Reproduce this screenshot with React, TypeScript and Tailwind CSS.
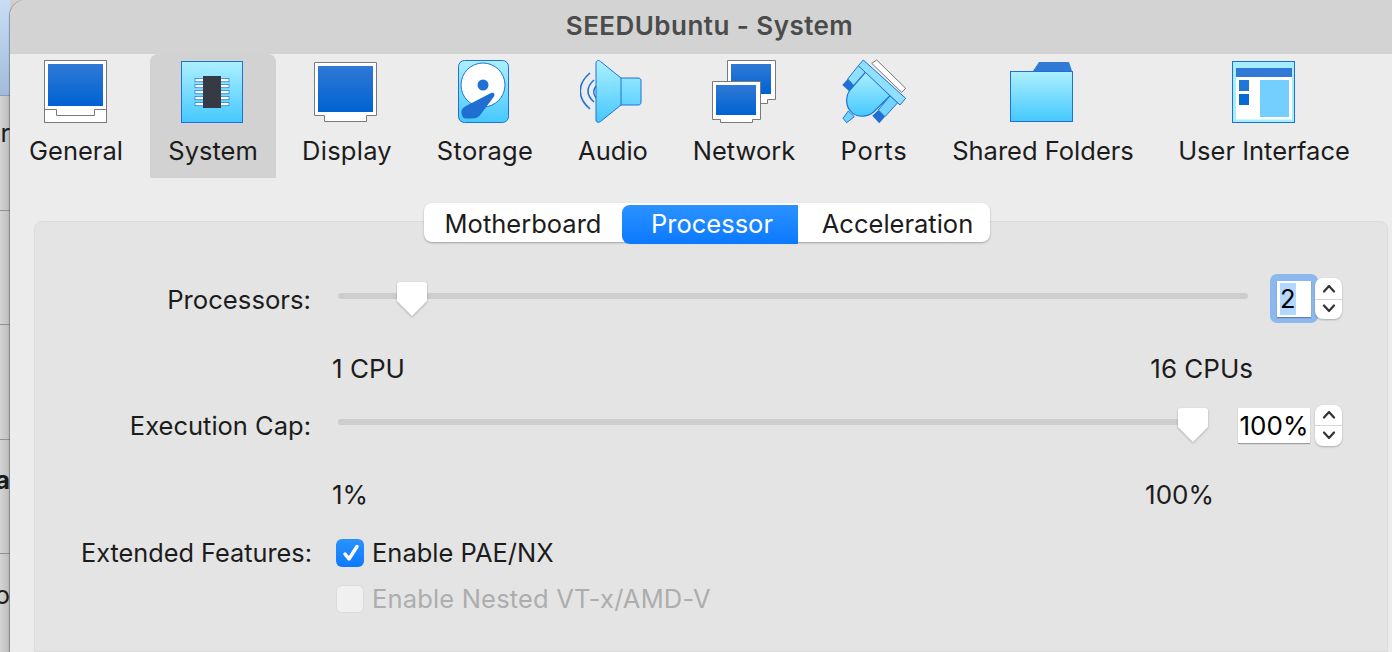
import React from 'react';

const font = "font-['Inter','Liberation_Sans',sans-serif]";

const Gradients = () => (
  <defs>
    <linearGradient id="blue" x1="0" y1="0" x2="0" y2="1">
      <stop offset="0" stopColor="#3079d6" />
      <stop offset="1" stopColor="#0062d2" />
    </linearGradient>
    <linearGradient id="sky" x1="0" y1="0" x2="0" y2="1">
      <stop offset="0" stopColor="#adf0ff" />
      <stop offset="1" stopColor="#45c8ff" />
    </linearGradient>
  </defs>
);

const GeneralIcon = () => (
  <svg width="66" height="66" viewBox="0 0 66 66">
    <Gradients />
    <rect x="1.5" y="1.5" width="62" height="62" fill="#fff" stroke="#7a7a7a" />
    <rect x="5" y="5" width="55" height="42" fill="url(#blue)" />
    <path d="M1.500 50.500H13.500V56.500H51.500V50.500H63.500" fill="none" stroke="#7a7a7a" />
  </svg>
);

const SystemIcon = () => (
  <svg width="66" height="66" viewBox="0 0 66 66">
    <Gradients />
    <rect x="1.5" y="2.5" width="61" height="61" fill="url(#sky)" stroke="#1f72d4" />
    {[19.5, 25.5, 31.5, 37.5, 43.5].map((y) => (
      <rect key={y} x="15" y={y} width="34" height="3.2" fill="#fff" stroke="#2f7ed8" strokeWidth="0.8" />
    ))}
    <rect x="23" y="17" width="18" height="32" fill="#353a45" />
  </svg>
);

const DisplayIcon = () => (
  <svg width="66" height="66" viewBox="0 0 66 66">
    <Gradients />
    <path d="M0.500 3.500H62.500V56.500H52.500V62.500H10.500V56.500H0.500Z" fill="#fff" stroke="#7a7a7a" />
    <rect x="4" y="7" width="55" height="46" fill="url(#blue)" />
  </svg>
);

const StorageIcon = () => (
  <svg width="54" height="66" viewBox="0 0 54 66">
    <Gradients />
    <rect x="0.5" y="1.500" width="50" height="62" rx="6" fill="url(#sky)" stroke="#1f72d4" />
    <circle cx="25" cy="26" r="22" fill="#fff" stroke="#1f72d4" />
    <circle cx="25" cy="26" r="5.500" fill="#1f72d4" />
    <path d="M4 56C2.500 52 4 49 8 47L33 34C35.500 33 37.500 35 36 37.500L23 55C21 58 18 59.500 14 59.500H7.500C5.500 59.500 4.500 58 4 56Z" fill="#1f6fd2" />
  </svg>
);

const AudioIcon = () => (
  <svg width="66" height="66" viewBox="0 0 66 66">
    <Gradients />
    <path d="M16 4C16 1.500 18.500 0.500 20.500 2.500L41 19H58C60 19 61 20 61 22V43C61 45 60 46 58 46H41L20.500 62.500C18.500 64 16 63.500 16 61Z" fill="url(#sky)" stroke="#1f72d4" />
    <path d="M41 19V46" stroke="#1f72d4" fill="none" />
    <path d="M10 14C-3 25 -3 39 10 50" fill="none" stroke="#1f72d4" strokeWidth="1.6" />
    <path d="M14 21C6 28 6 36 14 43" fill="none" stroke="#1f72d4" strokeWidth="1.6" />
    <path d="M16 27C13 31 13 35 16 39" fill="none" stroke="#1f72d4" strokeWidth="1.4" />
  </svg>
);

const NetworkIcon = () => (
  <svg width="66" height="66" viewBox="0 0 66 66">
    <Gradients />
    <path d="M16.500 1.500H64.500V40.500H56.500V44.500H16.500Z" fill="#fff" stroke="#7a7a7a" />
    <rect x="20" y="5" width="40" height="30" fill="url(#blue)" />
    <path d="M1.500 22.500H49.500V60.500H41.500V63.500H9.500V60.500H1.500Z" fill="#fff" stroke="#7a7a7a" />
    <rect x="5" y="26" width="40" height="30" fill="url(#blue)" />
  </svg>
);

const PortsIcon = () => (
  <svg width="66" height="66" viewBox="0 0 66 66">
    <Gradients />
    <path d="M35.700 1L64.700 29.300L60.700 33.300L30.700 4.300Z" fill="#fff" stroke="#777" strokeLinejoin="round" />
    <path d="M17.300 6.700L25 12.700L13 26.700L6.700 20Z" fill="#8fe0ff" stroke="#1f72d4" />
    <path d="M49 36.700L56.700 43.700L44 57.700L37.300 51Z" fill="#73d4ff" stroke="#1f72d4" />
    <path d="M7.300 52L13.300 57.700L5.700 63.700L2 59.300Z" fill="#73d4ff" stroke="#1f72d4" strokeLinejoin="round" />
    <path d="M25 12.700L49 36.700L32.300 53.300C26 58.500 15 59 9.500 52C4.500 47 4.500 37 9 31Z" fill="url(#sky)" stroke="#1f72d4" strokeWidth="1.200" />
    <path d="M22.300 1L64.700 39.300L59 46L17.300 6.700Z" fill="#8fe0ff" stroke="#1f72d4" strokeLinejoin="round" />
    <path d="M6.700 20L13 26.700L8 32L1.300 26Z" fill="#1f6fd2" />
    <path d="M37.300 51L44 57.700L38.300 64.300L31.300 56.700Z" fill="#1f6fd2" />
  </svg>
);

const FolderIcon = () => (
  <svg width="66" height="66" viewBox="0 0 66 66">
    <Gradients />
    <path d="M23 12L29 3H59L62 12Z" fill="#3079d6" />
    <rect x="0.5" y="12.500" width="62" height="50" fill="url(#sky)" stroke="#1f72d4" />
  </svg>
);

const UiIcon = () => (
  <svg width="66" height="66" viewBox="0 0 66 66">
    <rect x="1.500" y="2.500" width="62" height="61" fill="#a5eeff" stroke="#1f72d4" />
    <rect x="5" y="9" width="56" height="51.500" fill="#fff" />
    <rect x="5" y="9" width="56" height="9" fill="#3079d6" />
    <rect x="8" y="21" width="10" height="11" fill="#2276d5" />
    <rect x="8" y="35" width="10" height="11" fill="#0a68d4" />
    <rect x="29" y="21" width="29" height="37" fill="#74cfff" />
  </svg>
);

const tools = [
  { label: 'General', icon: GeneralIcon, w: 'w-[132px] mr-[8px]', track: '' },
  { label: 'System', icon: SystemIcon, w: 'w-[126px]', active: true, track: '' },
  { label: 'Display', icon: DisplayIcon, w: 'w-[142px]', track: 'tracking-[0.25px]' },
  { label: 'Storage', icon: StorageIcon, w: 'w-[134px]', track: 'tracking-[0.3px]' },
  { label: 'Audio', icon: AudioIcon, w: 'w-[122px]', track: '' },
  { label: 'Network', icon: NetworkIcon, w: 'w-[140px]', track: '' },
  { label: 'Ports', icon: PortsIcon, w: 'w-[120px]', track: 'tracking-[0.8px]' },
  { label: 'Shared Folders', icon: FolderIcon, w: 'w-[218px]', track: '' },
  { label: 'User Interface', icon: UiIcon, w: 'w-[224px]', track: '' },
];

const Stepper = () => (
  <div className="relative flex h-[41px] w-[27px] flex-col items-center justify-around rounded-[8px] bg-white shadow-[0_1px_2px_rgba(0,0,0,0.25)]">
    <svg width="14" height="9" viewBox="0 0 14 9">
      <path d="M2 7.500L7 2L12 7.500" fill="none" stroke="#333" strokeWidth="2.2" strokeLinecap="round" strokeLinejoin="round" />
    </svg>
    <div className="absolute left-0 right-0 top-1/2 h-px bg-[#d6d6d6]" />
    <svg width="14" height="9" viewBox="0 0 14 9">
      <path d="M2 1.500L7 7L12 1.500" fill="none" stroke="#333" strokeWidth="2.2" strokeLinecap="round" strokeLinejoin="round" />
    </svg>
  </div>
);

const Thumb = () => (
  <svg width="34" height="38" viewBox="0 0 34 38" className="drop-shadow-[0_1px_1px_rgba(0,0,0,0.25)]">
    <path d="M5 2H29C31 2 32 3 32 5V20C32 21 31.700 21.500 31 22L17 36L3 22C2.300 21.500 2 21 2 20V5C2 3 3 2 5 2Z" fill="#fff" />
  </svg>
);

const Slider = ({ thumbClass, widthClass }: { thumbClass: string; widthClass: string }) => (
  <div className={`relative h-[6px] ${widthClass} rounded-full bg-[#cdcdcd]`}>
    <div className={`absolute top-[-13px] ${thumbClass}`}>
      <Thumb />
    </div>
  </div>
);

export default function App() {
  return (
    <div className={`flex h-[652px] w-[1392px] overflow-hidden bg-[#cfcfcf] text-[25.5px] text-[#1c1c1c] ${font}`}>
      {/* window behind */}
      <div className="flex w-[10px] shrink-0 flex-col overflow-hidden bg-gradient-to-r from-[#d4d4d4] to-[#bcbcbc]">
        <div className="h-[96px] shrink-0 border-b border-[#8d9db0] bg-gradient-to-b from-[#c9dcf4] to-[#a2bcdc]" />
        <div className="h-[115px] shrink-0 border-b border-[#909090] pt-[22px] leading-[30px] [direction:rtl]">r</div>
        <div className="h-[114px] shrink-0 border-b border-[#909090]" />
        <div className="h-[115px] shrink-0 border-b border-[#909090]" />
        <div className="h-[114px] shrink-0 border-b border-[#909090] pt-[25px] font-bold leading-[30px] [direction:rtl]">a</div>
        <div className="pt-[26px] leading-[30px] [direction:rtl]">o</div>
      </div>

      <div className="flex min-w-0 flex-1 flex-col overflow-hidden rounded-tl-[16px] bg-[#ececec] shadow-[-1px_0_1px_rgba(0,0,0,0.3)]">
        <div className="flex h-[54px] shrink-0 items-center justify-center bg-[#d3d3d3] pb-[4px] pl-[17px] text-[26px] font-semibold tracking-[0.45px] text-[#4b4b4b]">
          SEEDUbuntu - System
        </div>

        {/* toolbar */}
        <div className="flex h-[124px] shrink-0">
          {tools.map((t) => (
            <div
              key={t.label}
              className={`flex ${t.w} shrink-0 flex-col items-center pt-[5px] ${t.active ? 'rounded-t-[8px] bg-[#d2d2d2]' : ''}`}
            >
              <div className="flex h-[66px] items-center justify-center">
                <t.icon />
              </div>
              <span className={`mt-[11px] leading-[30px] ${t.track}`}>{t.label}</span>
            </div>
          ))}
        </div>

        {/* settings pane */}
        <div className="relative ml-[24px] mr-[4px] mt-[43px] flex-1 rounded-t-[8px] border border-[#dcdcdc] bg-[#e4e4e4]">
          <div className="absolute left-[389px] top-[-19px] flex h-[39px] rounded-[8px] bg-white shadow-[0_1px_2px_rgba(0,0,0,0.3)]">
            <div className="flex w-[198px] items-center justify-center pt-[3px]">Motherboard</div>
            <div className="relative top-[2px] flex w-[176px] items-center justify-center rounded-l-[8px] bg-gradient-to-b from-[#2a92ff] to-[#0a79ff] pl-[4px] text-white">Processor</div>
            <div className="flex w-[192px] items-center justify-center pl-[7px] pt-[3px]">Acceleration</div>
          </div>

          <div className="flex flex-col pl-[46px] pt-[52px]">
            {/* processors */}
            <div className="flex h-[49px] items-center">
              <div className="w-[230px] whitespace-nowrap pt-[3px] text-right text-[25.7px]">Processors:</div>
              <div className="mb-[5px] ml-[27px]"><Slider widthClass="w-[910px]" thumbClass="left-[57px]" /></div>
              <div className="ml-[22px] flex h-[49px] w-[48px] items-center justify-center rounded-[7px] bg-[#8cb8ee]">
                <div className="flex h-[36px] w-[34px] items-center bg-white pl-[3px] shadow-[0_1px_1px_rgba(0,0,0,0.3)]">
                  <span className="bg-[#b3d7ff] leading-[32px] text-black">2</span>
                </div>
              </div>
              <div className="-ml-[3px]"><Stepper /></div>
            </div>
            <div className="mt-[31px] flex h-[30px] w-[1000px] items-center justify-between pl-[251px] text-[26px] leading-[30px]">
              <span>1 CPU</span>
              <span className="mr-[-172px]">16 CPUs</span>
            </div>
            {/* execution cap */}
            <div className="mt-[21px] flex h-[40px] items-center">
              <div className="w-[230px] whitespace-nowrap pt-[2px] text-right">Execution Cap:</div>
              <div className="mb-[6px] ml-[27px]"><Slider widthClass="w-[854px]" thumbClass="left-[838px]" /></div>
              <div className="ml-[46px] flex h-[35px] w-[72px] items-center justify-center bg-white text-[26px] text-black shadow-[0_1px_1px_rgba(0,0,0,0.3)]">100%</div>
              <div className="ml-[5px]"><Stepper /></div>
            </div>
            <div className="mt-[35px] flex h-[30px] w-[1000px] items-center justify-between pl-[251px] text-[26px] leading-[30px]">
              <span>1%</span>
              <span className="mr-[-133px]">100%</span>
            </div>
            {/* extended features */}
            <div className="mt-[28px] flex h-[30px] items-center">
              <div className="w-[230px] whitespace-nowrap text-right text-[25.3px]">Extended Features:</div>
              <div className="ml-[25px] flex h-[28px] w-[28px] items-center justify-center rounded-[6px] bg-gradient-to-b from-[#2a92ff] to-[#0a79ff]">
                <svg width="28" height="28" viewBox="0 0 28 28">
                  <path d="M9 15L13 20L21 7.500" fill="none" stroke="#fff" strokeWidth="3.500" strokeLinecap="round" strokeLinejoin="round" />
                </svg>
              </div>
              <span className="ml-[8px]">Enable PAE/NX</span>
            </div>
            <div className="mt-[16px] flex h-[30px] items-center">
              <div className="ml-[255px] h-[28px] w-[28px] rounded-[6px] border border-[#dcdcdc] bg-[#f0f0f0]" />
              <span className="ml-[8px] tracking-[0.17px] text-[#adadad]">Enable Nested VT-x/AMD-V</span>
            </div>
          </div>
        </div>
      </div>
    </div>
  );
}
